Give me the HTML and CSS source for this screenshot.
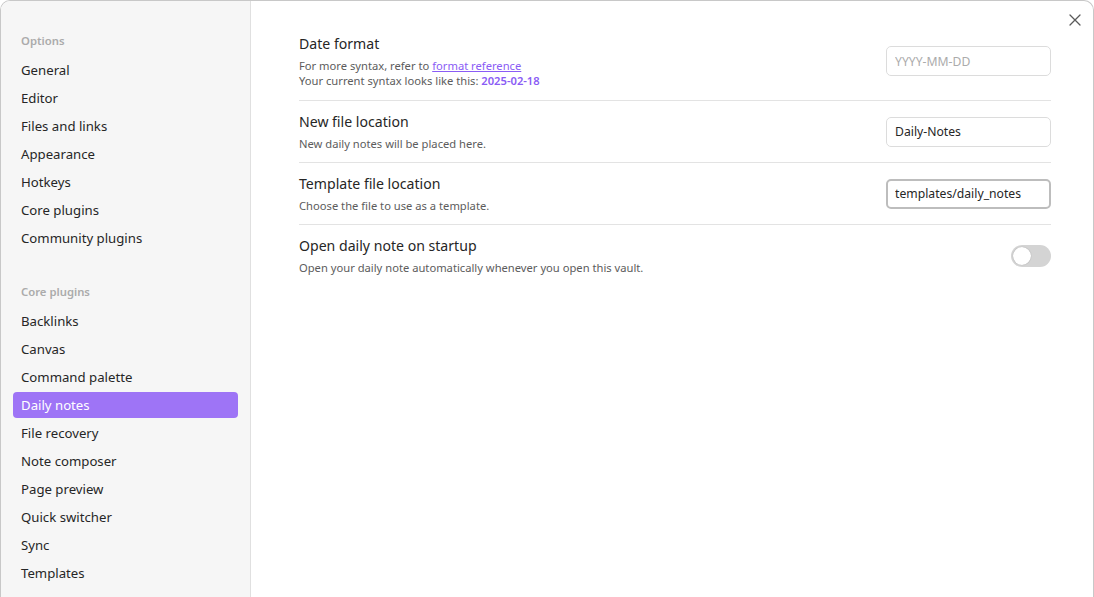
FILE: index.html
```html
<!DOCTYPE html>
<html lang="en">
<head>
<meta charset="utf-8">
<title>Settings - Daily notes</title>
<link rel="stylesheet" href="styles.css">
</head>
<body>
<div class="modal">
  <nav class="sidebar">
    <div class="group">
      <div class="group-title">Options</div>
      <div class="nav-item">General</div>
      <div class="nav-item">Editor</div>
      <div class="nav-item">Files and links</div>
      <div class="nav-item">Appearance</div>
      <div class="nav-item">Hotkeys</div>
      <div class="nav-item">Core plugins</div>
      <div class="nav-item">Community plugins</div>
    </div>
    <div class="group">
      <div class="group-title">Core plugins</div>
      <div class="nav-item">Backlinks</div>
      <div class="nav-item">Canvas</div>
      <div class="nav-item">Command palette</div>
      <div class="nav-item active">Daily notes</div>
      <div class="nav-item">File recovery</div>
      <div class="nav-item">Note composer</div>
      <div class="nav-item">Page preview</div>
      <div class="nav-item">Quick switcher</div>
      <div class="nav-item">Sync</div>
      <div class="nav-item">Templates</div>
    </div>
  </nav>
  <main class="content">
    <button class="close" aria-label="Close">
      <svg width="12" height="12" viewBox="0 0 12 12"><path d="M1 1L11 11M11 1L1 11" stroke="#5a5a5a" stroke-width="1.3" stroke-linecap="round" fill="none"/></svg>
    </button>
    <div class="setting">
      <div class="info">
        <div class="name">Date format</div>
        <div class="desc">For more syntax, refer to <a class="link" href="#">format reference</a><br>Your current syntax looks like this: <b class="accent">2025-02-18</b></div>
      </div>
      <input class="field" type="text" placeholder="YYYY-MM-DD">
    </div>
    <div class="setting">
      <div class="info">
        <div class="name">New file location</div>
        <div class="desc">New daily notes will be placed here.</div>
      </div>
      <input class="field" type="text" value="Daily-Notes">
    </div>
    <div class="setting">
      <div class="info">
        <div class="name">Template file location</div>
        <div class="desc">Choose the file to use as a template.</div>
      </div>
      <input class="field focused" type="text" value="templates/daily_notes">
    </div>
    <div class="setting">
      <div class="info">
        <div class="name">Open daily note on startup</div>
        <div class="desc">Open your daily note automatically whenever you open this vault.</div>
      </div>
      <div class="toggle"><div class="knob"></div></div>
    </div>
  </main>
</div>
</body>
</html>
```

FILE: styles.css
```css
* { box-sizing: border-box; }
html, body {
  margin: 0;
  height: 100%;
  background: #ffffff;
  overflow: hidden;
}
body {
  font-family: "Noto Sans", "Open Sans", sans-serif;
  color: #262626;
}
.modal {
  display: flex;
  width: 1094px;
  height: 597px;
  border: 1px solid #c8c8c8;
  border-bottom: 0;
  border-radius: 10px 10px 0 0;
  overflow: hidden;
  background: #ffffff;
}
.sidebar {
  width: 250px;
  flex: none;
  background: #f6f6f6;
  border-right: 1px solid #e0e0e0;
  padding: 30px 12px 0 12px;
  display: flex;
  flex-direction: column;
  gap: 31px;
}
.group {
  display: flex;
  flex-direction: column;
  gap: 2px;
}
.group-title {
  font-size: 11.3px;
  font-weight: 600;
  color: #ababab;
  height: 20px;
  line-height: 20px;
  padding-left: 8px;
  margin-bottom: 4px;
}
.nav-item {
  height: 26px;
  line-height: 26px;
  font-size: 13.2px;
  padding-left: 8px;
  border-radius: 4px;
  color: #262626;
}
.nav-item.active {
  background: #9e74f6;
  color: #ffffff;
}
.content {
  flex: 1;
  position: relative;
  padding: 22px 42px 0 48px;
}
.close {
  position: absolute;
  top: 12px;
  right: 11px;
  width: 14px;
  height: 14px;
  padding: 1px;
  border: 0;
  background: none;
  display: flex;
}
.setting {
  display: flex;
  align-items: center;
  justify-content: space-between;
  padding: 11px 0 11px;
  border-top: 1px solid #e3e3e3;
}
.setting:first-of-type {
  border-top: 0;
  padding-bottom: 12px;
}
.name {
  font-size: 14.1px;
  line-height: 20px;
  color: #262626;
}
.desc {
  margin-top: 4px;
  font-size: 11.2px;
  line-height: 15px;
  color: #5c5c5c;
}
.link {
  color: #8a5cf5;
  text-decoration: underline;
}
.accent {
  color: #8a5cf5;
  font-weight: 600;
}
.field {
  width: 165px;
  height: 30px;
  border: 1px solid #dcdcdc;
  border-radius: 5px;
  padding: 0 8px;
  font-family: inherit;
  font-size: 12.2px;
  color: #262626;
  background: #ffffff;
  outline: none;
}
.field::placeholder { color: #ababab; }
.field.focused {
  border: 2px solid #bdbdbd;
  padding: 0 7px;
}
.toggle {
  width: 40px;
  height: 22px;
  border-radius: 11px;
  background: #d4d4d4;
  padding: 2px;
}
.knob {
  width: 18px;
  height: 18px;
  border-radius: 50%;
  background: #ffffff;
  box-shadow: 0 0 1px rgba(0,0,0,0.35);
}
```
